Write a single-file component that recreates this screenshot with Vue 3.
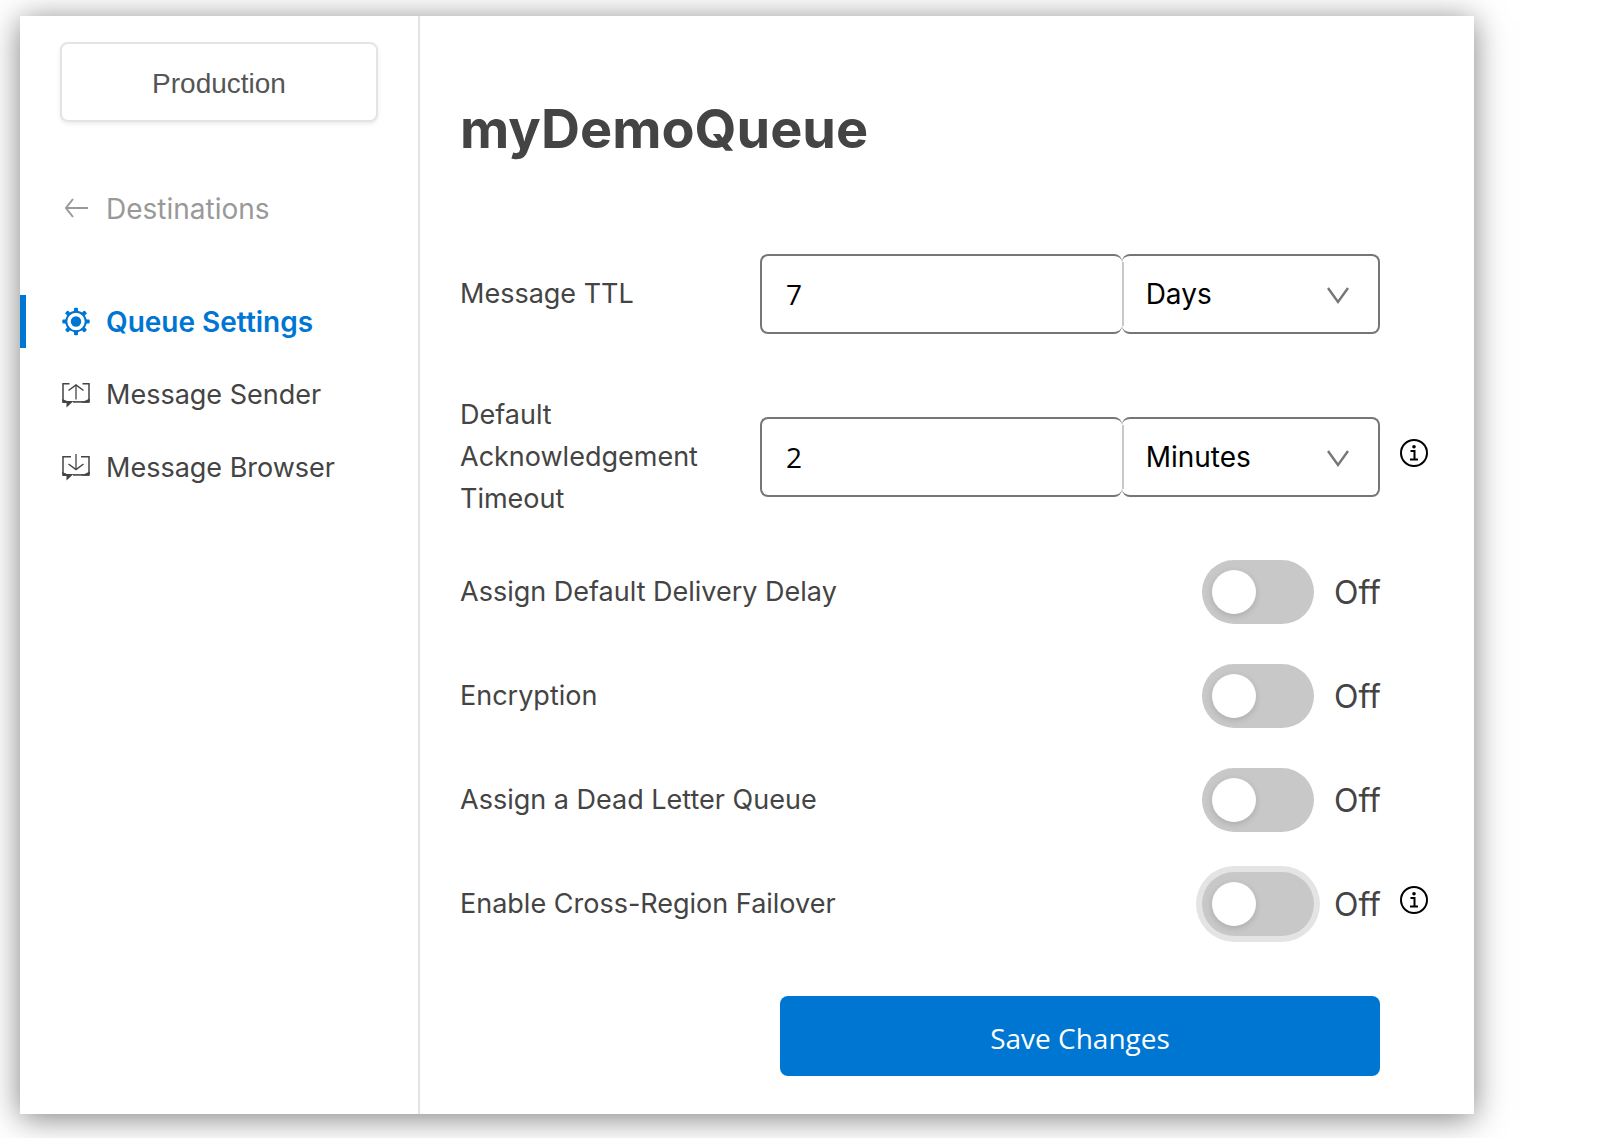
<script setup>
import { ref } from 'vue'

const timings = ref([
  { id: 'ttl', label: 'Message TTL', value: '7', unit: 'Days', info: false },
  { id: 'ack', label: 'Default Acknowledgement Timeout', value: '2', unit: 'Minutes', info: true },
])

const units = ['Seconds', 'Minutes', 'Hours', 'Days']

const toggles = ref([
  { id: 'delay', label: 'Assign Default Delivery Delay', on: false, info: false, focused: false },
  { id: 'encryption', label: 'Encryption', on: false, info: false, focused: false },
  { id: 'dlq', label: 'Assign a Dead Letter Queue', on: false, info: false, focused: false },
  { id: 'failover', label: 'Enable Cross-Region Failover', on: false, info: true, focused: true },
])

const teeth = [0, 45, 90, 135, 180, 225, 270, 315]
</script>

<template>
  <div class="window">
    <aside class="sidebar">
      <button type="button" class="environment">Production</button>

      <nav class="nav">
        <a href="#destinations" class="item back">
          <svg class="icon" viewBox="0 0 28 28" fill="none" stroke="currentColor" stroke-width="2" aria-hidden="true">
            <path d="M26 13H4M11 4L4 13l7 9" />
          </svg>
          Destinations
        </a>
        <a href="#settings" class="item active" aria-current="page">
          <svg class="icon" viewBox="0 0 28 28" aria-hidden="true">
            <circle cx="14" cy="13.500" r="9.700" fill="none" stroke="currentColor" stroke-width="2" />
            <circle cx="14" cy="13.500" r="5.200" fill="currentColor" />
            <path
              v-for="angle in teeth"
              :key="angle"
              d="M10.500 4.500L12 2.800V.8a1 1 0 0 1 1-1h2a1 1 0 0 1 1 1V2.800L17.500 4.500z"
              fill="currentColor"
              :transform="`rotate(${angle} 14 13.500)`"
            />
          </svg>
          Queue Settings
        </a>
        <a href="#sender" class="item">
          <svg class="icon" viewBox="0 0 28 28" fill="none" stroke="currentColor" aria-hidden="true">
            <path d="M7.500 2.700H1v18M20.500 2.700H27v18" stroke-width="1.500" />
            <path d="M11 20.900h16" stroke-width="1.600" />
            <path d="M.3 18L5 20h6.500l-7 6.500V22H.3zM27.700 17.500v4.300H19z" fill="currentColor" stroke="none" />
            <path d="M6.500 9.500L14 4l7.500 5.500" stroke-width="1.500" />
            <path d="M14 4v14.500" stroke-width="1.300" />
          </svg>
          Message Sender
        </a>
        <a href="#browser" class="item">
          <svg class="icon" viewBox="0 0 28 28" fill="none" stroke="currentColor" aria-hidden="true">
            <path d="M9 2.700H1v18M19 2.700h8v18" stroke-width="1.500" />
            <path d="M11 20.900h16" stroke-width="1.600" />
            <path d="M.3 18L5 20h6.500l-7 6.500V22H.3zM27.700 17.500v4.300H19z" fill="currentColor" stroke="none" />
            <path d="M6.500 10L14 15.500l7.500-5.500" stroke-width="1.500" />
            <path d="M14 0v15.500" stroke-width="1.300" />
          </svg>
          Message Browser
        </a>
      </nav>
    </aside>

    <main class="content">
      <h1 class="title">myDemoQueue</h1>

      <form class="form" @submit.prevent>
        <div class="timings">
          <div v-for="row in timings" :key="row.id" class="row">
            <label class="label" :for="row.id">{{ row.label }}</label>
            <div class="field">
              <input :id="row.id" v-model="row.value" class="amount" type="text" inputmode="numeric" />
              <div class="unit">
                <select v-model="row.unit" :aria-label="`${row.label} unit`">
                  <option v-for="unit in units" :key="unit">{{ unit }}</option>
                </select>
                <svg class="chevron" viewBox="0 0 24 18" fill="none" stroke="currentColor" stroke-width="2.400" aria-hidden="true">
                  <path d="M2 1L12 15 22 1" />
                </svg>
              </div>
            </div>
            <div class="hint">
              <button v-if="row.info" type="button" class="info" :aria-label="`About ${row.label}`">
                <svg viewBox="0 0 28 28" fill="none" stroke="currentColor" stroke-width="2" aria-hidden="true">
                  <circle cx="14" cy="14" r="13" />
                  <path d="M10.500 12H14.500V20M10 20.500h8" />
                  <circle cx="14" cy="7.800" r="1.800" fill="currentColor" stroke="none" />
                </svg>
              </button>
            </div>
          </div>
        </div>

        <div class="toggles">
          <div v-for="row in toggles" :key="row.id" class="row">
            <label class="label wide" :for="row.id">{{ row.label }}</label>
            <div class="switch">
              <input
                :id="row.id"
                v-model="row.on"
                type="checkbox"
                role="switch"
                class="track"
                :class="{ focused: row.focused }"
              />
              <span class="state">{{ row.on ? 'On' : 'Off' }}</span>
            </div>
            <div class="hint">
              <button v-if="row.info" type="button" class="info" :aria-label="`About ${row.label}`">
                <svg viewBox="0 0 28 28" fill="none" stroke="currentColor" stroke-width="2" aria-hidden="true">
                  <circle cx="14" cy="14" r="13" />
                  <path d="M10.500 12H14.500V20M10 20.500h8" />
                  <circle cx="14" cy="7.800" r="1.800" fill="currentColor" stroke="none" />
                </svg>
              </button>
            </div>
          </div>
        </div>

        <button type="submit" class="save">Save Changes</button>
      </form>
    </main>
  </div>
</template>

<style>
body {
  margin: 0;
  background: #fff;
}
</style>

<style scoped>
* {
  box-sizing: border-box;
}

.window {
  display: flex;
  margin: 16px 144px 24px 20px;
  background: #fff;
  box-shadow: 0 4px 30px rgba(0, 0, 0, 0.5);
  color: #444;
  font-family: Inter, "Liberation Sans", sans-serif;
  font-size: 27px;
  line-height: 42px;
}

.sidebar {
  flex: none;
  width: 400px;
  padding-top: 26px;
  border-right: 2px solid #e4e4e4;
}

.environment {
  display: block;
  width: calc(100% - 80px);
  height: 80px;
  margin: 0 40px 60px;
  padding: 4px 0 0;
  border: 2px solid #e4e4e4;
  border-radius: 8px;
  background: #fff;
  box-shadow: 0 2px 4px rgba(0, 0, 0, 0.08);
  color: #555;
  font: 28px/42px "Liberation Sans", Arial, sans-serif;
}

.nav {
  display: flex;
  flex-direction: column;
  gap: 20px;
}

.item {
  display: flex;
  align-items: center;
  gap: 16px;
  height: 53px;
  padding-left: 36px;
  border-left: 6px solid transparent;
  color: inherit;
  text-decoration: none;
  white-space: nowrap;
}

.item.back {
  margin-bottom: 40px;
  color: #999;
  font-size: 28px;
}

.item.active {
  border-left-color: #0076d3;
  color: #0076d3;
  font-size: 28px;
  font-weight: 600;
}

.icon {
  flex: none;
  width: 28px;
  height: 28px;
  overflow: visible;
}

.content {
  flex: 1;
  min-width: 0;
  padding: 80px 46px 38px 40px;
}

.title {
  margin: 0 0 92px;
  font-size: 54px;
  font-weight: 700;
  line-height: 66px;
}

.form {
  display: flex;
  flex-direction: column;
  gap: 40px;
}

.timings {
  display: flex;
  flex-direction: column;
  gap: 60px;
}

.toggles {
  display: flex;
  flex-direction: column;
  gap: 40px;
}

.row {
  display: flex;
  align-items: center;
}

.label {
  flex: none;
  width: 300px;
  padding-right: 40px;
}

.label.wide {
  flex: 1;
  width: auto;
}

.field {
  position: relative;
  display: grid;
  flex: 1;
  grid-template-columns: 7fr 5fr;
  min-width: 0;
  height: 80px;
}

.amount,
.unit select {
  width: 100%;
  min-width: 0;
  height: 100%;
  margin: 0;
  padding: 0 24px;
  border: 2px solid #767676;
  border-radius: 8px;
  background: #fff;
  color: #000;
  outline: none;
}

.amount {
  border-right: 0;
  font: 28px/42px "Open Sans", sans-serif;
}

.unit {
  position: relative;
}

.unit::before {
  content: "";
  position: absolute;
  top: 8px;
  bottom: 8px;
  left: 0;
  width: 2px;
  background: #c8c8c8;
}

.unit select {
  border-left: 0;
  appearance: none;
  font-family: inherit;
  font-size: 28px;
}

.chevron {
  position: absolute;
  top: 33px;
  right: 30px;
  width: 24px;
  height: 18px;
  color: #767676;
  pointer-events: none;
}

.hint {
  flex: none;
  width: 48px;
  padding: 0 0 8px 20px;
}

.info {
  display: block;
  width: 28px;
  height: 28px;
  padding: 0;
  border: 0;
  background: none;
  color: #000;
}

.info svg {
  display: block;
}

.switch {
  display: flex;
  align-items: center;
  gap: 20px;
}

.track {
  position: relative;
  width: 112px;
  height: 64px;
  margin: 0;
  border-radius: 32px;
  background: #c8c8c8;
  appearance: none;
}

.track::before {
  content: "";
  position: absolute;
  top: 10px;
  left: 10px;
  width: 44px;
  height: 44px;
  border-radius: 50%;
  background: #fff;
  box-shadow: 0 2px 6px rgba(0, 0, 0, 0.15);
}

.track:checked {
  background: #0076d3;
}

.track:checked::before {
  left: 58px;
}

.track.focused {
  box-shadow: 0 0 0 6px #e4e4e4;
}

.state {
  width: 46px;
  padding-top: 2px;
  font-size: 32px;
}

.save {
  height: 80px;
  margin: 20px 48px 0 320px;
  padding: 4px 0 0;
  border: 0;
  border-radius: 8px;
  background: #0076d3;
  color: #fff;
  font: 28px/42px "Open Sans", sans-serif;
}
</style>
